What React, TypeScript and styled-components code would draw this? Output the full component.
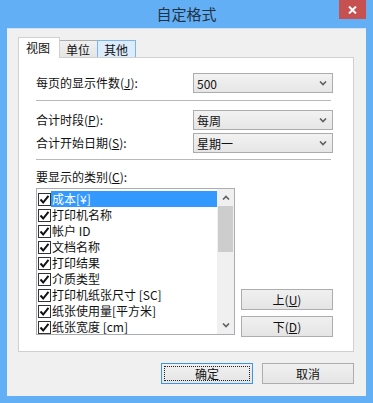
import styled, { createGlobalStyle, css } from "styled-components";

const GlobalStyle = createGlobalStyle`
    html, body {
        margin: 0;
        padding: 0;
        background: #62aff6;
    }
    * {
        box-sizing: border-box;
    }
`;

const uiFont = `"Noto Sans CJK SC", "Noto Sans", "Liberation Sans", sans-serif`;

const Frame = styled.div`
    width: 373px;
    height: 403px;
    background: #62aff6;
    display: flex;
    flex-direction: column;
    font-family: ${uiFont};
    font-size: 12px;
    color: #111;
`;

const TitleBar = styled.div`
    height: 28px;
    display: grid;
    grid-template-columns: 1fr auto 1fr;
`;

const Title = styled.div`
    grid-column: 2;
    align-self: center;
    font-size: 15px;
    color: #24313f;
    line-height: 28px;
`;

const CloseButton = styled.div`
    grid-column: 3;
    justify-self: end;
    align-self: start;
    margin-right: 7px;
    width: 27px;
    height: 19px;
    background: #c75050;
    display: flex;
    align-items: center;
    justify-content: center;
`;

const Client = styled.div`
    flex: 1;
    margin: 0 7px 7px;
    background: #f0f0f0;
    border-top: 1px solid #cfe3f6;
    padding: 8px 12px 0 11px;
    display: flex;
    flex-direction: column;
`;

const TabRow = styled.div`
    display: flex;
    align-items: flex-end;
    height: 20px;
`;

const Tab = styled.div<{ $state: "active" | "normal" | "hover" }>`
    display: flex;
    align-items: center;
    padding: 0 7px 0 6px;
    height: 17px;
    line-height: 17px;
    border: 1px solid #acacac;
    border-bottom: none;
    background: linear-gradient(#f0f0f0, #e5e5e5);
    margin-left: -1px;
    ${(p) =>
        p.$state === "active" &&
        css`
            height: 21px;
            margin-bottom: -1px;
            margin-left: 0;
            padding: 0 9px 2px 7px;
            background: #fff;
            border-color: #d0d0d0;
            position: relative;
            z-index: 1;
        `}
    ${(p) =>
        p.$state === "hover" &&
        css`
            background: #dcecfc;
            border-color: #7eb4ea;
        `}
`;

const Panel = styled.div`
    height: 295px;
    background: #fff;
    border: 1px solid #d0d0d0;
    padding: 15px 20px 0 17px;
    display: flex;
    flex-direction: column;
`;

const FormRow = styled.div<{ $gap?: number }>`
    display: flex;
    align-items: center;
    justify-content: space-between;
    height: 20px;
    margin-top: ${(p) => p.$gap ?? 0}px;
`;

const Label = styled.span`
    line-height: 16px;
`;

const Combo = styled.div`
    width: 140px;
    height: 20px;
    border: 1px solid #acacac;
    background: linear-gradient(#f2f2f2, #e6e6e6);
    display: flex;
    align-items: center;
    justify-content: space-between;
    padding: 0 5px 0 3px;
`;

const Separator = styled.div<{ $top: number }>`
    height: 1px;
    background: #b9b9b9;
    margin: ${(p) => p.$top}px 2px 0 0;
`;

const SectionLabel = styled.div`
    margin-top: 9px;
    line-height: 16px;
`;

const ListArea = styled.div`
    display: flex;
    gap: 6px;
    margin-top: 3px;
`;

const ListBox = styled.div`
    width: 200px;
    height: 147px;
    border: 1px solid #abadb3;
    background: #fff;
    display: flex;
    overflow: hidden;
`;

const ListItems = styled.div`
    flex: 1;
    padding: 2px 0 0 1px;
    overflow: hidden;
`;

const ListRow = styled.div`
    display: flex;
    align-items: center;
    height: 16px;
`;

const CheckBox = styled.div`
    width: 13px;
    height: 13px;
    border: 1px solid #333;
    background: #fff;
    display: flex;
    align-items: center;
    justify-content: center;
    flex-shrink: 0;
`;

const ItemText = styled.span<{ $selected?: boolean }>`
    flex: 1;
    height: 16px;
    line-height: 16px;
    padding-left: 1px;
    white-space: nowrap;
    color: ${(p) => (p.$selected ? "#fff" : "#111")};
    background: ${(p) => (p.$selected ? "#3399ff" : "transparent")};
`;

const ScrollBar = styled.div`
    width: 17px;
    background: #f0f0f0;
    display: flex;
    flex-direction: column;
`;

const ScrollArrow = styled.div`
    height: 17px;
    display: flex;
    align-items: center;
    justify-content: center;
`;

const ScrollThumb = styled.div`
    height: 46px;
    margin: 0 1px;
    background: #cdcdcd;
`;

const ScrollTrack = styled.div`
    flex: 1;
`;

const SideButtons = styled.div`
    display: flex;
    flex-direction: column;
    gap: 6px;
    padding-top: 101px;
`;

const Button = styled.div<{ $default?: boolean }>`
    width: 92px;
    height: 21px;
    border: 1px solid #adadad;
    background: linear-gradient(#f0f0f0, #e5e5e5);
    display: flex;
    align-items: center;
    justify-content: center;
    line-height: 16px;
    ${(p) =>
        p.$default &&
        css`
            border-color: #3c96e6;
            outline: 1px dotted #222;
            outline-offset: -4px;
        `}
`;

const Footer = styled.div`
    display: flex;
    justify-content: flex-end;
    gap: 9px;
    margin-top: 11px;
`;

const items = [
    "成本[¥]",
    "打印机名称",
    "帐户 ID",
    "文档名称",
    "打印结果",
    "介质类型",
    "打印机纸张尺寸 [SC]",
    "纸张使用量[平方米]",
    "纸张宽度 [cm]",
];

function Chevron({ up }: { up?: boolean }) {
    return (
        <svg width="8" height="5" viewBox="0 0 8 5">
            <path
                d={up ? "M1 4.5 L4 1.5 L7 4.5" : "M1 0.5 L4 3.5 L7 0.5"}
                fill="none"
                stroke="#606060"
                strokeWidth="1.6"
            />
        </svg>
    );
}

function Check() {
    return (
        <svg width="11" height="11" viewBox="0 0 11 11">
            <path d="M1.5 5.5 L4.2 8.5 L9.5 1.8" fill="none" stroke="#111" strokeWidth="2" />
        </svg>
    );
}

export default function App() {
    return (
        <>
            <GlobalStyle />
            <Frame>
                <TitleBar>
                    <Title>自定格式</Title>
                    <CloseButton>
                        <svg width="9" height="8" viewBox="0 0 9 8">
                            <path d="M1 0.5 L8 7.5 M8 0.5 L1 7.5" stroke="#fff" strokeWidth="2" />
                        </svg>
                    </CloseButton>
                </TitleBar>
                <Client>
                    <TabRow>
                        <Tab $state="active">视图</Tab>
                        <Tab $state="normal">单位</Tab>
                        <Tab $state="hover">其他</Tab>
                    </TabRow>
                    <Panel>
                        <FormRow>
                            <Label>
                                每页的显示件数(<u>J</u>):
                            </Label>
                            <Combo>
                                <span>500</span>
                                <Chevron />
                            </Combo>
                        </FormRow>
                        <Separator $top={7} />
                        <FormRow $gap={9}>
                            <Label>
                                合计时段(<u>P</u>):
                            </Label>
                            <Combo>
                                <span>每周</span>
                                <Chevron />
                            </Combo>
                        </FormRow>
                        <FormRow $gap={3}>
                            <Label>
                                合计开始日期(<u>S</u>):
                            </Label>
                            <Combo>
                                <span>星期一</span>
                                <Chevron />
                            </Combo>
                        </FormRow>
                        <Separator $top={6} />
                        <SectionLabel>
                            要显示的类别(<u>C</u>):
                        </SectionLabel>
                        <ListArea>
                            <ListBox>
                                <ListItems>
                                    {items.map((item, i) => (
                                        <ListRow key={item}>
                                            <CheckBox>
                                                <Check />
                                            </CheckBox>
                                            <ItemText $selected={i === 0}>{item}</ItemText>
                                        </ListRow>
                                    ))}
                                </ListItems>
                                <ScrollBar>
                                    <ScrollArrow>
                                        <Chevron up />
                                    </ScrollArrow>
                                    <ScrollThumb />
                                    <ScrollTrack />
                                    <ScrollArrow>
                                        <Chevron />
                                    </ScrollArrow>
                                </ScrollBar>
                            </ListBox>
                            <SideButtons>
                                <Button>
                                    上(<u>U</u>)
                                </Button>
                                <Button>
                                    下(<u>D</u>)
                                </Button>
                            </SideButtons>
                        </ListArea>
                    </Panel>
                    <Footer>
                        <Button $default>确定</Button>
                        <Button>取消</Button>
                    </Footer>
                </Client>
            </Frame>
        </>
    );
}
